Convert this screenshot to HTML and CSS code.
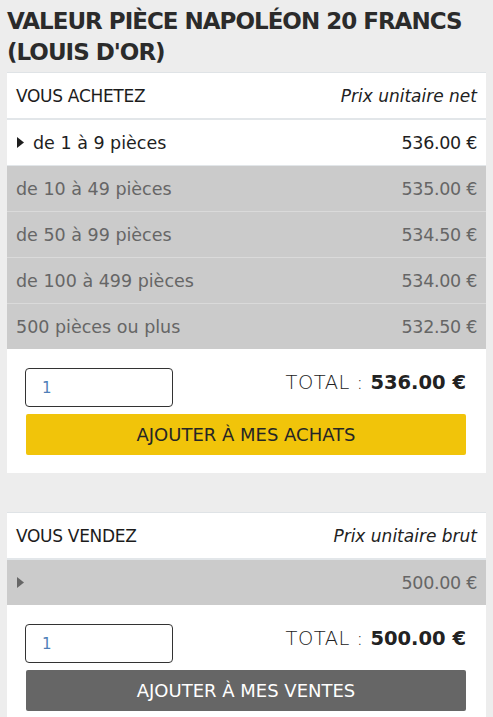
FILE: index.html
```html
<!DOCTYPE html>
<html lang="fr">
<head>
<meta charset="utf-8">
<title>Valeur pièce Napoléon 20 Francs</title>
<link rel="stylesheet" href="styles.css">
</head>
<body>
<h1 class="title">VALEUR PIÈCE NAPOLÉON 20 FRANCS (LOUIS D'OR)</h1>

<section class="card">
  <div class="card-head">
    <span class="head-label">VOUS ACHETEZ</span>
    <span class="head-note">Prix unitaire net</span>
  </div>
  <div class="row active">
    <span class="row-label"><svg class="tri" width="7" height="11" viewBox="0 0 7 11"><path d="M0 0 L7 5.5 L0 11 Z" fill="currentColor"/></svg>de 1 à 9 pièces</span>
    <span class="row-price">536.00 €</span>
  </div>
  <div class="row"><span class="row-label">de 10 à 49 pièces</span><span class="row-price">535.00 €</span></div>
  <div class="row"><span class="row-label">de 50 à 99 pièces</span><span class="row-price">534.50 €</span></div>
  <div class="row"><span class="row-label">de 100 à 499 pièces</span><span class="row-price">534.00 €</span></div>
  <div class="row last"><span class="row-label">500 pièces ou plus</span><span class="row-price">532.50 €</span></div>
  <div class="card-foot">
    <div class="foot-line">
      <input class="qty" type="text" value="1">
      <div class="total"><span class="total-label">TOTAL : </span><strong>536.00 €</strong></div>
    </div>
    <button class="btn btn-buy">AJOUTER À MES ACHATS</button>
  </div>
</section>

<section class="card card-sell">
  <div class="card-head">
    <span class="head-label">VOUS VENDEZ</span>
    <span class="head-note">Prix unitaire brut</span>
  </div>
  <div class="row last">
    <span class="row-label"><svg class="tri" width="7" height="11" viewBox="0 0 7 11"><path d="M0 0 L7 5.5 L0 11 Z" fill="currentColor"/></svg></span>
    <span class="row-price">500.00 €</span>
  </div>
  <div class="card-foot">
    <div class="foot-line">
      <input class="qty" type="text" value="1">
      <div class="total"><span class="total-label">TOTAL : </span><strong>500.00 €</strong></div>
    </div>
    <button class="btn btn-sell">AJOUTER À MES VENTES</button>
  </div>
</section>
</body>
</html>
```

FILE: styles.css
```css
* { box-sizing: border-box; }
html, body { margin: 0; }
body {
  background: #ededed;
  padding: 0 7px;
  font-family: "DejaVu Sans", sans-serif;
  color: #222;
}
.title {
  margin: 0;
  padding: 6px 0 4px;
  font-size: 23px;
  line-height: 31px;
  font-weight: bold;
  color: #2b2b2b;
  letter-spacing: -1px;
}
.card {
  background: #fff;
  border-top: 1px solid #dfe3e6;
}
.card-sell { margin-top: 39px; }
.card-head {
  display: flex;
  justify-content: space-between;
  align-items: center;
  height: 47px;
  padding: 0 9px;
  border-bottom: 2px solid #e2e6e9;
  font-size: 17px;
}
.head-label { color: #1c1c1c; letter-spacing: -0.3px; }
.head-note { font-style: italic; color: #222; }
.row {
  display: flex;
  justify-content: space-between;
  align-items: center;
  height: 46px;
  padding: 0 9px;
  background: #cbcbcb;
  color: #666;
  border-bottom: 1px solid #dadada;
  font-size: 17.5px;
}
.row.last { border-bottom: none; height: 45px; }
.row.active { background: #fff; color: #1e1e1e; border-bottom: 1px solid #e2e6e9; }
.row-label { display: flex; align-items: center; }
.row-price { letter-spacing: -0.3px; }
.tri { margin: 0 9px 0 1px; }
.card-foot { padding: 19px 20px 18px 18px; }
.foot-line {
  display: flex;
  justify-content: space-between;
  align-items: flex-start;
}
.qty {
  width: 148px;
  height: 39px;
  border: 1px solid #333;
  border-radius: 4px;
  padding: 0 16px;
  font-family: inherit;
  font-size: 15px;
  color: #4f7fb8;
  background: #fff;
}
.total {
  font-size: 19.5px;
  padding-top: 3px;
  color: #222;
}
.total-label { font-weight: 300; letter-spacing: 0.5px; }
.total strong { font-weight: bold; }
.btn {
  display: block;
  width: 440px;
  height: 41px;
  margin: 7px 0 0 1px;
  border: none;
  border-radius: 2px;
  font-family: inherit;
  font-size: 18px;
  letter-spacing: 0;
}
.btn-buy { background: #f1c40a; color: #262626; }
.btn-sell { background: #666; color: #fff; }
```
